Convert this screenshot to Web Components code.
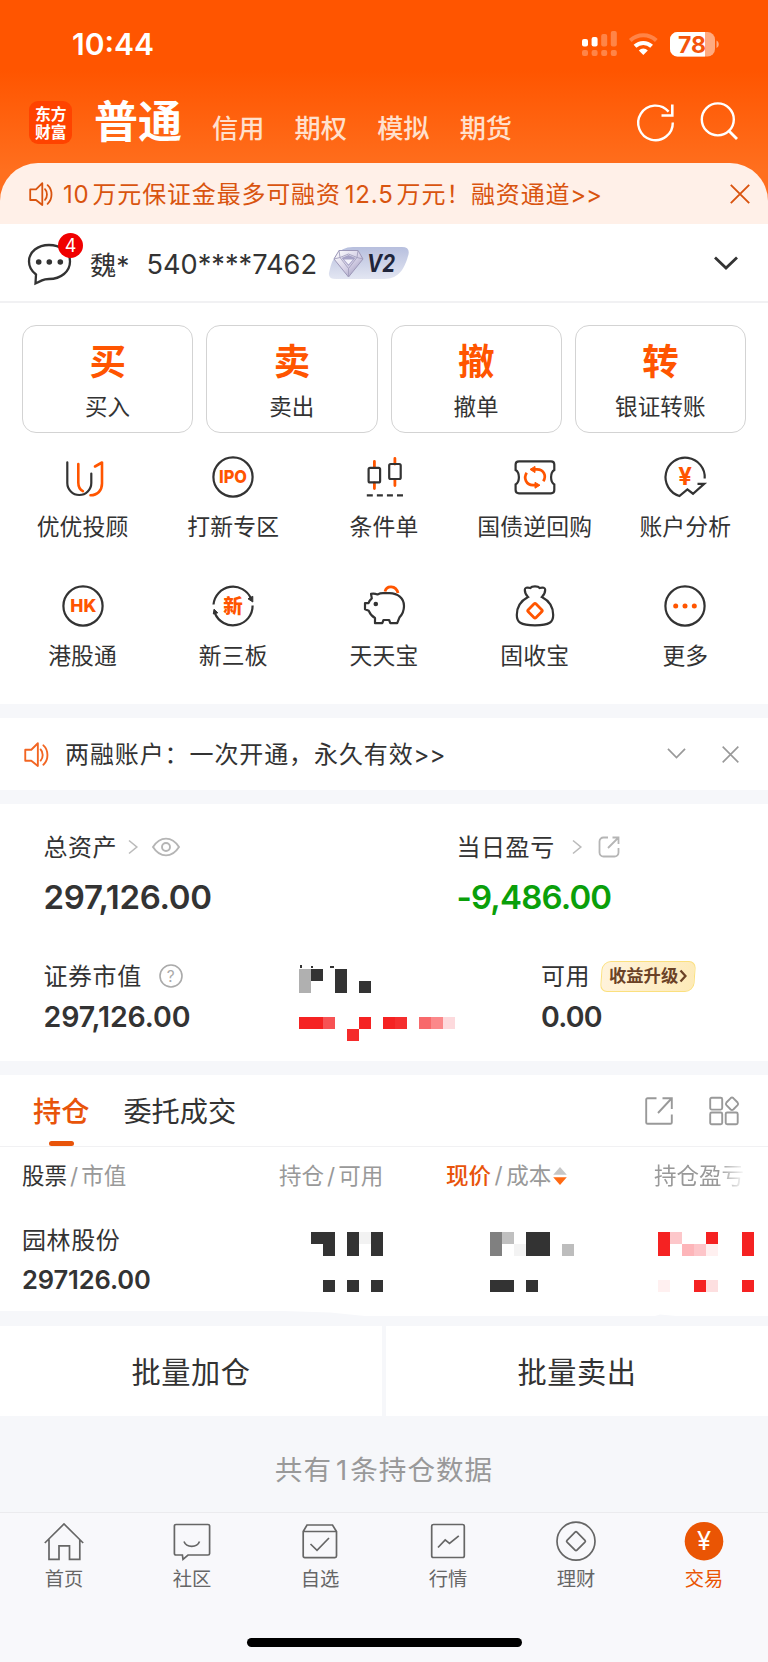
<!DOCTYPE html>
<html lang="zh-CN">
<head>
<meta charset="utf-8">
<title>交易</title>
<style>
  html, body {
    margin: 0;
    padding: 0;
    background: #f6f7fa;
  }
  body {
    width: 768px;
    height: 1662px;
    overflow: hidden;
    font-family: "Inter", "Noto Sans CJK SC", sans-serif;
    color: #333;
  }
</style>
</head>
<body>
<trade-app></trade-app>

<script>
const icons = {
  speaker: ['0 0 24 24', `<g fill="none" stroke="currentColor" stroke-width="1.8" stroke-linejoin="round" stroke-linecap="round"><path d="M1.2 7.4V18H7l6.3 5V1.2L7 7.4z"/><path d="M16 7.2c2.6 2.6 2.6 8 0 10.6M18.6 3.2c5.2 4.6 5.2 14 0 18.6"/></g>`],
  close: ['0 0 20 20', `<path d="M.8.8l18.4 18.4M19.2.8L.8 19.2" fill="none" stroke="currentColor" stroke-width="1.9"/>`],
  refresh: ['0 0 40 40', `<path d="M36.8 21.5A17.3 17.3 0 1 1 32.6 10.6" fill="none" stroke="#fff" stroke-width="2.4"/><path d="M36.3 3.5v11H25.5" fill="none" stroke="#fff" stroke-width="2.6"/>`],
  search: ['0 0 40 40', `<circle cx="18.8" cy="18.4" r="16" fill="none" stroke="#fff" stroke-width="2.4"/><path d="M30 30l8 8" stroke="#fff" stroke-width="2.8"/>`],
  message: ['0 0 46 46', `<path d="M10 34.5C5.5 31 3 27 3 21.5C3 11.5 12 5 23 5s21 6.5 21 16.5S35 39 23 39c-3 0-5 .4-7 1.4L9.5 43.5z" fill="none" stroke="#333" stroke-width="2.3"/><g fill="#333"><circle cx="12.7" cy="22" r="2.8"/><circle cx="23.3" cy="22" r="2.8"/><circle cx="34.3" cy="22" r="2.8"/></g>`],
  down: ['0 0 24 14', `<path d="M1 1.5l11 10.5L23 1.5" fill="none" stroke="currentColor" stroke-width="2.8"/>`],
  thinDown: ['0 0 20 12', `<path d="M1 1l9 9 9-9" fill="none" stroke="currentColor" stroke-width="1.8"/>`],
  right: ['0 0 10 14', `<path d="M1 .5L8.8 7 1 13.5" fill="none" stroke="#bbb" stroke-width="1.6"/>`],
  eye: ['0 0 28 20', `<g fill="none" stroke="#b5b5b5" stroke-width="1.9"><path d="M1 10C4.5 4.500 9 1.600 14 1.600S23.500 4.500 27 10c-3.500 5.500-8 8.400-13 8.400S4.500 15.500 1 10z"/><circle cx="14" cy="10" r="4"/></g>`],
  help: ['0 0 24 24', `<circle cx="12" cy="12" r="11" fill="none" stroke="#aaa" stroke-width="1.6"/><text x="12" y="17.5" text-anchor="middle" font-size="15.5" fill="#aaa">?</text>`],
  share: ['0 0 22 22', `<path d="M10 1.5H5.5a4 4 0 0 0-4 4v11a4 4 0 0 0 4 4h11a4 4 0 0 0 4-4V12M10 12L20 2M14.5 1.5h6V8" fill="none" stroke="#b5b5b5" stroke-width="1.8"/>`],
  export: ['0 0 28 28', `<path d="M11.5 1.2H2.6Q1.2 1.2 1.2 2.6V25.4Q1.2 26.8 2.6 26.8H25.4Q26.8 26.8 26.8 25.4V17.5M13 16L26.5 1.5M17.5 1.2h9.3V12" fill="none" stroke="#999" stroke-width="1.9"/>`],
  apps: ['0 0 30 30', `<g fill="none" stroke="#999" stroke-width="1.9"><rect x="1.2" y="1.8" width="12" height="11.8" rx="1.5"/><rect x="1.2" y="16.5" width="12" height="11.8" rx="1.5"/><rect x="16.7" y="16.5" width="12" height="11.8" rx="1.5"/><path d="M21.700 2.100Q23 1 24.300 2.100L28.600 6.500Q29.700 7.800 28.600 9.100L24.300 13.500Q23 14.600 21.700 13.500L17.400 9.100Q16.300 7.800 17.400 6.500z"/></g>`],
  sort: ['0 0 14 20', `<path d="M7 1l6.8 7.7H.2z" fill="#c6c6c6"/><path d="M7 19L.2 11.3h13.6z" fill="#ff6a13"/>`],

  advisor: ['0 0 44 44', `<g fill="none" stroke-width="2.2" stroke-linecap="round" stroke-linejoin="round"><path stroke="#333" d="M6.3 7.3V28a12 12 0 0 0 24 0V18.5"/><path stroke="#ff5500" stroke-width="2.6" d="M17.3 9v18.5c0 4.5 1.8 7.3 4.6 8.6M34 11.5l7-4V28.5c0 7-4.5 11.7-11.5 11.7"/></g>`],
  ipo: ['0 0 44 44', `<circle cx="22" cy="22" r="19.6" fill="none" stroke="#333" stroke-width="2.2"/><text x="22" y="28.3" text-anchor="middle" textLength="28" lengthAdjust="spacingAndGlyphs" font-size="18" font-weight="800" fill="#ff5500">IPO</text>`],
  candles: ['0 0 44 44', `<path d="M12.4 6.5V12M12.4 28v5.5M32.9 3.5V9M32.9 24.5v6" stroke="#ff5500" stroke-width="2.8" stroke-linecap="round"/><g fill="none" stroke="#333" stroke-width="2.2"><rect x="6.6" y="12.8" width="11.5" height="14.6" rx="1.5"/><rect x="27.2" y="9" width="11.5" height="15" rx="1.5"/><path d="M4.8 40.4H41" stroke-dasharray="6 4.06"/></g>`],
  ticket: ['0 0 44 44', `<path d="M6 6.3H38Q41.3 6.3 41.3 9.6V15C37 17.5 37 27 41.3 29.5V35Q41.3 38.3 38 38.3H6Q2.6 38.3 2.6 35V29.5C7 27 7 17.5 2.6 15V9.6Q2.6 6.3 6 6.3z" fill="none" stroke="#333" stroke-width="2.2"/><g fill="none" stroke="#ff5500" stroke-width="2.7"><path d="M13.7 17.8C10.3 23 13 30 20 30.2h3M30.3 26.2C33.7 21 31 14.5 24 14.4h-3.5"/></g><path d="M22 27.3l5 2.9-5 3zM22 11.4v6.2l-5-3.2z" fill="#ff5500" stroke="#ff5500" stroke-linejoin="round"/>`],
  analysis: ['0 0 44 44', `<path d="M41.7 23.5A19.6 19.6 0 1 0 16.4 41L24.4 34.3 30 38.7 41.2 28.8H34.5" fill="none" stroke="#333" stroke-width="2.2"/><text x="22" y="29.8" text-anchor="middle" font-size="24" font-weight="700" fill="#ff5500">¥</text>`],
  hk: ['0 0 44 44', `<circle cx="22" cy="22" r="19.6" fill="none" stroke="#333" stroke-width="2.2"/><text x="22.3" y="28.3" text-anchor="middle" textLength="26" lengthAdjust="spacingAndGlyphs" font-size="18" font-weight="800" fill="#ff5500">HK</text>`],
  otc: ['0 0 44 44', `<path d="M2.5 20.5A19.6 19.6 0 0 1 40 14.5M41.6 21.5A19.6 19.6 0 0 1 3.8 29" fill="none" stroke="#333" stroke-width="2.2"/><path d="M37 14.8l4.8-2.5v5.7zM6.8 28.8L3 25.2 2.3 30z" fill="#333" stroke="#333" stroke-linejoin="round"/><text x="22" y="29" text-anchor="middle" font-size="19.5" font-weight="900" fill="#ff5500">新</text>`],
  pig: ['0 0 44 44', `<path d="M9 9.8l.8 4.6c-1.8 1.5-2.7 3-3.3 4.8H3v6l3.8 1.6c1.3 3.3 3.3 5.4 6.2 7.2v5.2h7.3l1.2-3.2h5.6l1.2 3.2h6.9l2.2-5.6c3-3.2 4.6-7 4.6-11.6 0-8-6.3-12.6-14.5-12.8h-6.5c-2.4 0-4 .5-5.5 1.2C13.5 9.6 11.2 9.3 9 9.8z" fill="none" stroke="#333" stroke-width="2.2" stroke-linejoin="round"/><circle cx="13.8" cy="20" r="2.3" fill="#333"/><path d="M23 7.5c1.5-6.5 11-6.5 13 1.5" fill="none" stroke="#ff5500" stroke-width="2.8"/>`],
  bag: ['0 0 44 44', `<path d="M15 13C12.8 11 11.8 8 11.8 5.8 11.8 3.8 14 3 17.3 4 19 1.8 25 1.8 26.7 4 30 3 32.2 3.8 32.2 5.8 32.2 8 31 11 28.9 13 36.5 17 40.2 24 40.2 31 40.2 38 37 41.3 22 41.3S3.8 38 3.8 31C3.8 24 7.5 17 15 13z" fill="none" stroke="#333" stroke-width="2.2"/><rect x="16.5" y="21.3" width="11" height="11" rx="1.5" transform="rotate(45 22 26.8)" fill="none" stroke="#ff5500" stroke-width="2.8"/>`],
  more: ['0 0 44 44', `<circle cx="22" cy="22" r="19.6" fill="none" stroke="#333" stroke-width="2.2"/><g fill="#ff5500"><circle cx="12.7" cy="22" r="2.5"/><circle cx="22" cy="22" r="2.5"/><circle cx="31.3" cy="22" r="2.5"/></g>`],

  home: ['0 0 40 40', `<path d="M.8 22L20 3l19.2 19M5 18.5v19.8h10V24.8h10.5v13.5h10.3V18.5" fill="none" stroke="currentColor" stroke-width="1.7"/>`],
  community: ['0 0 40 40', `<path d="M4 3.5h32q1.6 0 1.6 1.6v27.3q0 1.6-1.6 1.6H16l-5 4.3-.6-4.3H4q-1.6 0-1.6-1.6V5.1Q2.4 3.5 4 3.5zM12 20.5c2.5 6.5 13 6.5 15.500 0" fill="none" stroke="currentColor" stroke-width="1.7"/>`],
  watch: ['0 0 40 40', `<path d="M3.2 10.5L7 4h25.5l4 6.5V35q0 1.6-1.6 1.6H4.8q-1.6 0-1.6-1.6zM3.2 10.5h33.3M10.5 23l6.5 6.3L29 17" fill="none" stroke="currentColor" stroke-width="1.7"/>`],
  market: ['0 0 40 40', `<rect x="3.7" y="3.5" width="32.6" height="33" rx="1.8" fill="none" stroke="currentColor" stroke-width="1.7"/><path d="M10 26.5l7.2-7.7 4.3 3.5 9.3-7.5" fill="none" stroke="currentColor" stroke-width="1.7"/>`],
  finance: ['0 0 40 40', `<circle cx="20" cy="20.2" r="19" fill="none" stroke="currentColor" stroke-width="1.7"/><rect x="13" y="13.2" width="14" height="14" rx="1.3" transform="rotate(45 20 20.2)" fill="none" stroke="currentColor" stroke-width="1.7"/>`],
  trade: ['0 0 40 40', `<circle cx="20" cy="20.2" r="19.3" fill="#ea5504"/><text x="20" y="29.3" text-anchor="middle" font-size="25.5" fill="#fff">¥</text>`]
};

class SvgIcon extends HTMLElement {
  constructor() {
    super();
    this.attachShadow({ mode: 'open' });
  }

  connectedCallback() {
    const [box, body] = icons[this.getAttribute('name')];
    const [, , w, h] = box.split(' ');
    const width = this.getAttribute('width') || w;
    this.shadowRoot.innerHTML = `
      <style>
        :host { display: block; flex: none; line-height: 0; }
        svg { display: block; overflow: visible; }
      </style>
      <svg viewBox="${box}" width="${width}" height="${width * h / w}">${body}</svg>
    `;
  }
}

// Censored value: each cell is "column,row,width,height,colour" on a 12px grid.
class PixelMask extends HTMLElement {
  constructor() {
    super();
    this.attachShadow({ mode: 'open' });
  }

  connectedCallback() {
    const cells = this.getAttribute('cells').trim().split(/\s+/).map((cell) => {
      const [x, y, w, h, fill] = cell.split(',');
      return `<rect x="${x * 12}" y="${y * 12}" width="${w * 12}" height="${h * 12}" fill="${fill}"/>`;
    });
    this.shadowRoot.innerHTML = `
      <style>
        :host { display: block; }
        svg { display: block; overflow: visible; }
      </style>
      <svg width="${this.getAttribute('cols') * 12}" height="${this.getAttribute('rows') * 12}" shape-rendering="crispEdges">${cells.join('')}</svg>
    `;
  }
}

function define(name, html) {
  const template = document.createElement('template');
  template.innerHTML = html;
  customElements.define(name, class extends HTMLElement {
    constructor() {
      super();
      this.attachShadow({ mode: 'open' });
      this.shadowRoot.appendChild(template.content.cloneNode(true));
    }
  });
}

customElements.define('svg-icon', SvgIcon);
customElements.define('pixel-mask', PixelMask);

define('status-bar', `
  <style>
    :host { display: flex; height: 86px; align-items: center; justify-content: space-between; padding: 2px 48px 0 72px; box-sizing: border-box; color: #fff; }
    .time { font-size: 30px; font-weight: 600; }
    svg { display: block; }
  </style>
  <span class="time">10:44</span>
  <svg width="138" height="28" viewBox="0 0 138 28">
    <g fill="#fff">
      <rect x="0" y="9" width="6" height="7.5" rx="2"/>
      <rect x="9.6" y="7" width="6" height="9.5" rx="2"/>
      <g opacity=".28">
        <rect x="19.2" y="4" width="6" height="12.5" rx="2"/>
        <rect x="28.8" y="1" width="6" height="15.5" rx="2"/>
        <rect x="0" y="20" width="6" height="6" rx="2"/>
        <rect x="9.6" y="20" width="6" height="6" rx="2"/>
        <rect x="19.2" y="20" width="6" height="6" rx="2"/>
        <rect x="28.8" y="20" width="6" height="6" rx="2"/>
      </g>
      <path d="M61.3 25l-4.5-4.6a6.5 6.5 0 0 1 9 0z"/>
    </g>
    <path d="M53 16.3a12 12 0 0 1 16.6 0" fill="none" stroke="#fff" stroke-width="4"/>
    <path d="M48.3 10.5a19 19 0 0 1 26 0" fill="none" stroke="#fff" stroke-width="4" opacity=".28"/>
    <rect x="88" y="2" width="45" height="24.5" rx="7.5" fill="#fff" opacity=".5"/>
    <path d="M95.5 2H123v24.5H95.5a7.5 7.5 0 0 1-7.5-7.5V9.5A7.5 7.5 0 0 1 95.5 2z" fill="#fff"/>
    <path d="M134.5 10.5c3 1.5 3 6 0 7.5z" fill="#fff" opacity=".5"/>
    <text x="110" y="22.6" text-anchor="middle" textLength="28" font-size="23" font-weight="700" fill="#f4550c">78</text>
  </svg>
`);

define('nav-bar', `
  <style>
    :host { display: flex; height: 77px; box-sizing: border-box; padding: 15px 29px 0 29px; color: #fff; }
    .logo { width: 43px; height: 43px; box-sizing: border-box; padding: 4px 5px 0 6px; border-radius: 9px; background: #ff4300; word-break: break-all; font: 700 15.8px/17.7px "Noto Sans CJK SC", sans-serif; }
    h1 { margin: 0 0 0 22px; font-size: 44px; line-height: 42px; font-weight: 700; }
    nav { display: flex; gap: 30.2px; margin: 14px 0 0 30px; font-size: 26.2px; line-height: 28px; font-weight: 500; color: #ffe0cd; }
    .tools { display: flex; gap: 23px; margin-left: auto; }
  </style>
  <div class="logo">东方财富</div>
  <h1>普通</h1>
  <nav><span>信用</span><span>期权</span><span>模拟</span><span>期货</span></nav>
  <div class="tools"><svg-icon name="refresh"></svg-icon><svg-icon name="search"></svg-icon></div>
`);

define('promo-bar', `
  <style>
    :host { display: flex; height: 61px; align-items: center; box-sizing: border-box; padding: 0 18px 0 29px; border-radius: 38px 38px 0 0; background: #fff0e8; color: #d9540f; font-size: 24px; letter-spacing: .82px; }
    .text { margin: -2px 0 0 10px; white-space: nowrap; }
    .num { margin-right: 3px; }
    .mid { margin-left: 4px; }
    .arrows { letter-spacing: -.3px; }
    .close { margin-left: auto; }
  </style>
  <svg-icon name="speaker"></svg-icon>
  <span class="text"><span class="num">10</span>万元保证金最多可融资<span class="num mid">12.5</span>万元！融资通道<span class="arrows">&gt;&gt;</span></span>
  <svg-icon class="close" name="close"></svg-icon>
`);

define('account-bar', `
  <style>
    :host { display: flex; height: 79px; align-items: center; box-sizing: border-box; padding: 0 30px 0 26px; border-bottom: 2px solid #f1f1f3; background: #fff; font-size: 27.2px; }
    .msg { position: relative; }
    .badge { position: absolute; left: 32px; top: -7px; width: 25px; height: 25px; border-radius: 50%; background: #f00000; color: #fff; font-size: 18px; line-height: 25px; text-align: center; }
    .name { margin: 1px 0 0 18px; font-size: 26.3px; }
    .id { margin: 3px 0 0 17px; }
    .level { margin: 1px 0 0 11px; }
    .arrow { margin-left: auto; }
  </style>
  <div class="msg"><svg-icon name="message"></svg-icon><span class="badge">4</span></div>
  <span class="name">魏*</span>
  <span class="id">540****7462</span>
  <svg class="level" width="82" height="34" viewBox="0 0 82 34">
    <defs>
      <linearGradient id="plate" x1="0" y1="0" x2="0" y2="1"><stop offset="0" stop-color="#b7bfde"/><stop offset="1" stop-color="#e3e6f2"/></linearGradient>
      <linearGradient id="gem" x1="0" y1="0" x2="1" y2="1"><stop offset="0" stop-color="#fff"/><stop offset=".55" stop-color="#d5d0e6"/><stop offset="1" stop-color="#8c86ad"/></linearGradient>
    </defs>
    <path d="M25 1H74q8 0 6.5 7.5C77 21 72 33 56 33H8Q-.5 33 1.2 26 6 1 25 1z" fill="url(#plate)"/>
    <path d="M11 4.5h19l5 8.5L20.5 31 6 13z" fill="url(#gem)" stroke="#9d98b8" stroke-width="1"/>
    <path d="M6 13l6-1.5 8.5 11 8.5-11 6 1.5M11 4.5l1 7 8.5-3.5L29 11.5l1-7M20.5 22.5V31" fill="none" stroke="#a39fbd" stroke-width=".9"/>
    <path d="M13.5 12l7-3 7 3-7 8z" fill="#a6a2c6"/><path d="M16 13.5h9l-4.5 5z" fill="#f4f3fb"/>
    <text x="53" y="25.5" text-anchor="middle" font-size="24" font-weight="700" font-style="italic" textLength="28" lengthAdjust="spacingAndGlyphs" fill="#20253b">V2</text>
  </svg>
  <svg-icon class="arrow" name="down"></svg-icon>
`);

define('action-card', `
  <style>
    :host { display: flex; flex-direction: column; align-items: center; height: 108px; box-sizing: border-box; padding-top: 17px; border: 1.5px solid #d3d3d3; border-radius: 14px; }
    ::slotted(b) { font-size: 36.5px; line-height: 38px; font-weight: 700; color: #ff5500; }
    .label { margin-top: 14px; font-size: 22.5px; line-height: 24px; letter-spacing: .2px; }
  </style>
  <slot name="sign"></slot>
  <span class="label"><slot></slot></span>
`);

define('quick-entry', `
  <style>
    :host { display: flex; flex-direction: column; align-items: center; height: 129px; }
    .label { margin-top: 14px; font-size: 22.8px; line-height: 28px; letter-spacing: .2px; white-space: nowrap; }
  </style>
  <slot name="icon"></slot>
  <span class="label"><slot></slot></span>
`);

define('quick-panel', `
  <style>
    :host { display: block; height: 401px; box-sizing: border-box; padding-top: 22px; background: #fff; }
    .cards { display: grid; grid-template-columns: repeat(4, 1fr); gap: 13px; padding: 0 22px; }
    .entries { display: grid; grid-template-columns: repeat(5, 150.7px); justify-content: center; padding-top: 22px; }
  </style>
  <div class="cards">
    <action-card><b slot="sign">买</b>买入</action-card>
    <action-card><b slot="sign">卖</b>卖出</action-card>
    <action-card><b slot="sign">撤</b>撤单</action-card>
    <action-card><b slot="sign">转</b>银证转账</action-card>
  </div>
  <div class="entries">
    <quick-entry><svg-icon slot="icon" name="advisor"></svg-icon>优优投顾</quick-entry>
    <quick-entry><svg-icon slot="icon" name="ipo"></svg-icon>打新专区</quick-entry>
    <quick-entry><svg-icon slot="icon" name="candles"></svg-icon>条件单</quick-entry>
    <quick-entry><svg-icon slot="icon" name="ticket"></svg-icon>国债逆回购</quick-entry>
    <quick-entry><svg-icon slot="icon" name="analysis"></svg-icon>账户分析</quick-entry>
    <quick-entry><svg-icon slot="icon" name="hk"></svg-icon>港股通</quick-entry>
    <quick-entry><svg-icon slot="icon" name="otc"></svg-icon>新三板</quick-entry>
    <quick-entry><svg-icon slot="icon" name="pig"></svg-icon>天天宝</quick-entry>
    <quick-entry><svg-icon slot="icon" name="bag"></svg-icon>固收宝</quick-entry>
    <quick-entry><svg-icon slot="icon" name="more"></svg-icon>更多</quick-entry>
  </div>
`);

define('margin-notice', `
  <style>
    :host { display: flex; height: 72px; align-items: center; margin-top: 14px; box-sizing: border-box; padding: 0 29px 0 24px; background: #fff; font-size: 24px; letter-spacing: .9px; }
    .speaker { color: #f26522; }
    .text { margin: -4px 0 0 16px; white-space: nowrap; }
    .arrows { letter-spacing: 0; }
    .down { margin-left: auto; color: #999; }
    .close { margin-left: 36px; color: #999; }
  </style>
  <svg-icon class="speaker" name="speaker" width="25"></svg-icon>
  <span class="text">两融账户：一次开通，永久有效<span class="arrows">&gt;&gt;</span></span>
  <svg-icon class="down" name="thinDown" width="19"></svg-icon>
  <svg-icon class="close" name="close" width="17"></svg-icon>
`);

define('asset-cell', `
  <style>
    :host { display: block; }
    .label { display: flex; align-items: center; height: 32px; font-size: 24px; letter-spacing: .55px; white-space: nowrap; }
    .text { margin-top: -3px; display: flex; align-items: center; }
    .value { font-weight: 600; font-size: var(--value-size, 28.5px); line-height: 40px; margin-top: var(--value-gap, 5px); color: var(--value-color, #333); letter-spacing: var(--value-spacing, -.1px); }
  </style>
  <div class="label"><span class="text"><slot></slot></span><slot name="extra"></slot></div>
  <div class="value"><slot name="value"></slot></div>
`);

define('asset-panel', `
  <style>
    :host { display: block; height: 257px; margin-top: 14px; box-sizing: border-box; padding: 27px 0 0 43.5px; background: #fff; }
    .total { display: grid; grid-template-columns: 413px 1fr; height: 129px; --value-size: 33px; --value-gap: 14px; --value-spacing: -.3px; }
    .detail { display: grid; grid-template-columns: 255.5px 242px 1fr; }
    .loss { --value-color: #0a9f0a; --value-spacing: -.85px; }
    .free { --value-spacing: -.8px; }
    .arrow { margin-left: 11px; }
    .loss .arrow { margin-left: 17px; }
    .eye { margin-left: 13.5px; }
    .share { margin-left: 16px; }
    .help { margin-left: 17px; }
    .upgrade { position: relative; z-index: 0; display: flex; height: 31px; width: 94px; box-sizing: border-box; margin-left: 11px; align-items: center; justify-content: center; color: #6b4226; font-size: 17.3px; line-height: 28px; font-weight: 700; letter-spacing: 0; }
    .upgrade::before { content: ""; position: absolute; z-index: -1; inset: 0; border: 1.5px solid #fbe07e; border-radius: 9px 7px 9px 7px; transform: skewX(-4deg); background: linear-gradient(100deg, #fff3dc, #fdeab8); }
    .upgrade svg { margin-left: 1px; }
    .hidden { padding-top: 5px; }
    .hidden .second { margin-top: 24px; }
    .ticks { display: block; height: 4px; }
  </style>
  <div class="total">
    <asset-cell>总资产<svg-icon slot="extra" class="arrow" name="right"></svg-icon><svg-icon slot="extra" class="eye" name="eye"></svg-icon><span slot="value">297,126.00</span></asset-cell>
    <asset-cell class="loss">当日盈亏<svg-icon slot="extra" class="arrow" name="right"></svg-icon><svg-icon slot="extra" class="share" name="share"></svg-icon><span slot="value">-9,486.00</span></asset-cell>
  </div>
  <div class="detail">
    <asset-cell>证券市值<svg-icon slot="extra" class="help" name="help"></svg-icon><span slot="value">297,126.00</span></asset-cell>
    <div class="hidden">
      <svg class="ticks" width="40" height="4"><path d="M1 0h2v3H1zM12 1h2v2h-2zM31 1h4v2h-4z" fill="#333"/></svg>
      <pixel-mask cols="6" rows="2" cells="0,0,1,2,#b0b0b0 1,0,1,1,#333 3,0,1,2,#333 5,1,1,1,#333"></pixel-mask>
      <pixel-mask class="second" cols="13" rows="2" cells="0,0,2,1,#f52222 2,0,1,1,#f75254 5,0,1,1,#f52222 4,1,1,1,#f52b2b 7,0,1,1,#f52222 8,0,1,1,#f52e2e 10,0,1,1,#f8696b 11,0,1,1,#fb888a 12,0,1,1,#fddadd"></pixel-mask>
    </div>
    <asset-cell class="free">可用<span slot="extra" class="upgrade">收益升级<svg width="8" height="14"><path d="M1.5 1.5L6.5 7l-5 5.5" fill="none" stroke="#6b4226" stroke-width="2.3"/></svg></span><span slot="value">0.00</span></asset-cell>
  </div>
`);

define('holdings-panel', `
  <style>
    :host { display: block; position: relative; height: 236px; margin-top: 14px; margin-bottom: 15px; background: #fff; }
    .tabs { display: flex; height: 72px; align-items: center; box-sizing: border-box; padding: 0 29px 0 33px; border-bottom: 1.5px solid #f1f1f3; font-size: 28.2px; }
    .tab { position: relative; top: 1px; line-height: 40px; }
    .on { color: #e8540a; font-weight: 500; margin-right: 34px; }
    .on::after { content: ""; position: absolute; left: 16px; top: 49px; width: 25px; height: 5px; border-radius: 2.5px; background: #e8540a; }
    .export { margin-left: auto; }
    .apps { margin-left: 36px; }
    .head { display: grid; grid-template-columns: 257px 167px 208px 1fr; height: 58px; align-items: center; box-sizing: border-box; padding: 0 0 4px 22px; font-size: 22.5px; color: #999; white-space: nowrap; }
    .head i { font-style: normal; margin: 0 3px; }
    .head b { font-weight: 500; color: #e8540a; }
    .head .dark { color: #333; font-weight: 400; }
    .price { display: flex; align-items: center; }
    .head .price i { margin: 0 3.5px; }
    .price svg-icon { margin: 3px 0 0 1.5px; }
    .fade { width: 91px; -webkit-mask-image: linear-gradient(90deg, #000 64px, transparent 92px); mask-image: linear-gradient(90deg, #000 64px, transparent 92px); }
    .row { display: grid; grid-template-columns: 289px 179px 168px 1fr; padding: 19px 0 0 22px; }
    .stock { font-size: 24px; line-height: 33px; letter-spacing: .6px; }
    .worth { font-size: 25.5px; line-height: 32px; margin-top: 7px; font-weight: 600; letter-spacing: -.1px; }
    .mask { padding-top: 8px; }
    .mask .second { margin-top: 24px; }
    .cut { position: absolute; left: 0; top: 236px; display: block; }
  </style>
  <div class="tabs">
    <span class="tab on">持仓</span><span class="tab">委托成交</span>
    <svg-icon class="export" name="export"></svg-icon><svg-icon class="apps" name="apps"></svg-icon>
  </div>
  <div class="head">
    <span><span class="dark">股票</span><i>/</i>市值</span>
    <span>持仓<i>/</i>可用</span>
    <span class="price"><b>现价</b><i>/</i>成本<svg-icon name="sort"></svg-icon></span>
    <span class="fade">持仓盈亏</span>
  </div>
  <div class="row">
    <div><div class="stock">园林股份</div><div class="worth">297126.00</div></div>
    <div class="mask">
      <pixel-mask cols="6" rows="2" cells="0,0,1,1,#333 1,0,1,2,#333 3,0,1,2,#333 4,0,1,1,#f2f2f2 5,0,1,2,#333"></pixel-mask>
      <pixel-mask class="second" cols="6" rows="1" cells="1,0,1,1,#333 3,0,1,1,#333 5,0,1,1,#333"></pixel-mask>
    </div>
    <div class="mask">
      <pixel-mask cols="7" rows="2" cells="0,0,1,2,#808080 1,0,1,1,#c0c0c0 2,1,1,1,#f3f3f3 3,0,2,2,#333 6,1,1,1,#bdbdbd"></pixel-mask>
      <pixel-mask class="second" cols="7" rows="1" cells="0,0,2,1,#333 3,0,1,1,#333"></pixel-mask>
    </div>
    <div class="mask">
      <pixel-mask cols="8" rows="2" cells="0,0,1,2,#f52222 1,0,1,1,#fdc7ca 2,1,1,1,#fdb5b9 3,1,1,1,#fdc5c9 4,0,1,1,#f52222 4,1,1,1,#fff0f0 7,0,1,2,#f52222"></pixel-mask>
      <pixel-mask class="second" cols="8" rows="1" cells="0,0,1,1,#fff0f0 3,0,1,1,#f52222 4,0,1,1,#fddfe0 7,0,1,1,#f52222"></pixel-mask>
    </div>
  </div>
  <svg class="cut" width="768" height="5"><path d="M283 0L330 1.5 365 5H655L660 3.5 676 5H768V0z" fill="#fff"/></svg>
`);

define('batch-bar', `
  <style>
    :host { display: grid; grid-template-columns: 1fr 1fr; gap: 4px; height: 90px; }
    button { border: 0; padding: 0 0 2px; background: #fff; color: #333; font: inherit; font-size: 29.2px; letter-spacing: .6px; }
  </style>
  <button>批量加仓</button>
  <button>批量卖出</button>
`);

define('tab-item', `
  <style>
    :host { display: flex; flex: 1; flex-direction: column; align-items: center; padding-top: 8px; color: #666; font-size: 19.3px; line-height: 24px; }
    :host([active]) { color: #ea5504; }
    .label { margin-top: 5.5px; }
  </style>
  <slot name="icon"></slot>
  <span class="label"><slot></slot></span>
`);

define('tab-bar', `
  <style>
    :host { display: flex; flex-direction: column; height: 150px; box-sizing: border-box; border-top: 1.5px solid #ebebee; background: #f8f8fb; }
    .items { display: flex; height: 125px; }
    .home { width: 275px; height: 9px; border-radius: 5px; background: #000; align-self: center; }
  </style>
  <div class="items">
    <tab-item><svg-icon slot="icon" name="home"></svg-icon>首页</tab-item>
    <tab-item><svg-icon slot="icon" name="community"></svg-icon>社区</tab-item>
    <tab-item><svg-icon slot="icon" name="watch"></svg-icon>自选</tab-item>
    <tab-item><svg-icon slot="icon" name="market"></svg-icon>行情</tab-item>
    <tab-item><svg-icon slot="icon" name="finance"></svg-icon>理财</tab-item>
    <tab-item active><svg-icon slot="icon" name="trade"></svg-icon>交易</tab-item>
  </div>
  <div class="home"></div>
`);

define('trade-app', `
  <style>
    :host { display: block; width: 768px; height: 1662px; background: #f6f7fa; }
    header { background: linear-gradient(#ff5500 70px, #ff6f1e 170px); }
    .count { height: 96px; box-sizing: border-box; padding-top: 12px; text-align: center; font-size: 27.6px; line-height: 84px; letter-spacing: 1px; color: #999; }
    .count span { margin: 0 2px 0 4px; }
  </style>
  <header>
    <status-bar></status-bar>
    <nav-bar></nav-bar>
    <promo-bar></promo-bar>
  </header>
  <account-bar></account-bar>
  <quick-panel></quick-panel>
  <margin-notice></margin-notice>
  <asset-panel></asset-panel>
  <holdings-panel></holdings-panel>
  <batch-bar></batch-bar>
  <div class="count">共有<span>1</span>条持仓数据</div>
  <tab-bar></tab-bar>
`);
</script>
</body>
</html>
